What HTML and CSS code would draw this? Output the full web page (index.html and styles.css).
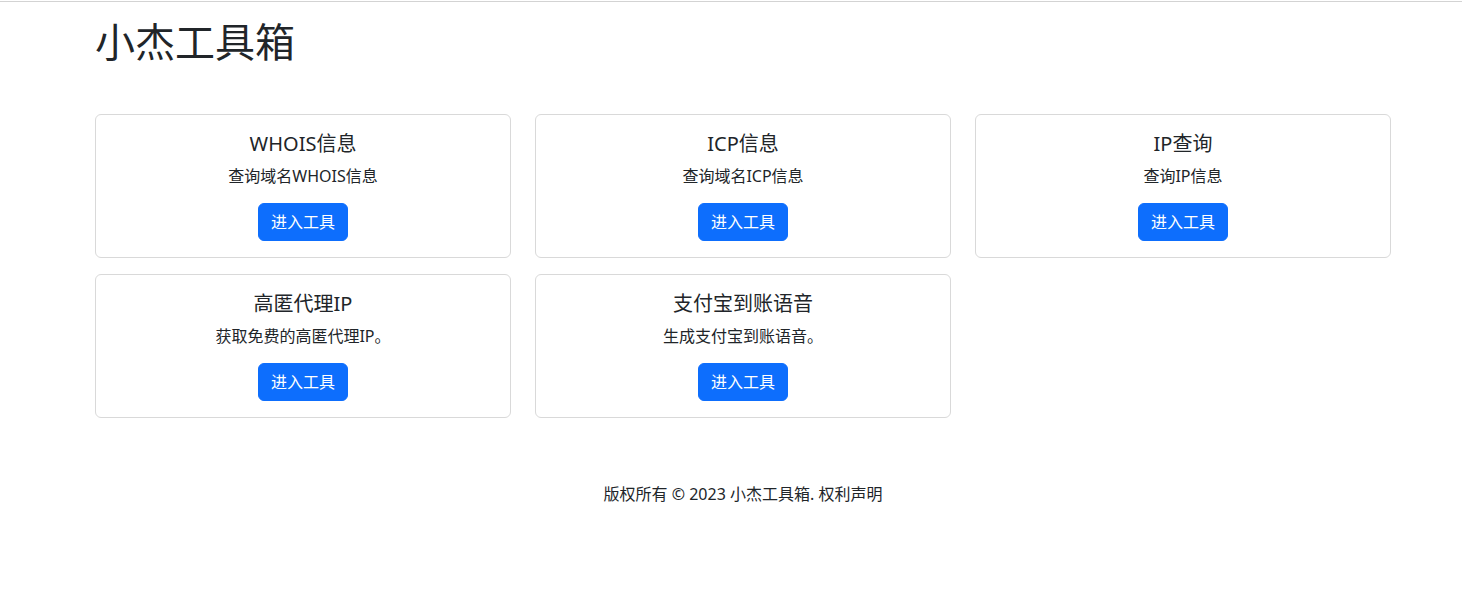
FILE: index.html
```html
<!DOCTYPE html>
<html lang="zh-CN">
<head>
    <meta charset="UTF-8">
    <meta name="viewport" content="width=device-width, initial-scale=1.0">
    <title>小杰工具箱</title>
    <link rel="stylesheet" href="styles.css">
</head>
<body>
    <div class="page">
        <div class="container">
            <h1 class="site-title">小杰工具箱</h1>
            <div class="tools">
                <div class="tool-card">
                    <h5 class="tool-card__title">WHOIS信息</h5>
                    <p class="tool-card__text">查询域名WHOIS信息</p>
                    <a class="btn" href="#">进入工具</a>
                </div>
                <div class="tool-card">
                    <h5 class="tool-card__title">ICP信息</h5>
                    <p class="tool-card__text">查询域名ICP信息</p>
                    <a class="btn" href="#">进入工具</a>
                </div>
                <div class="tool-card">
                    <h5 class="tool-card__title">IP查询</h5>
                    <p class="tool-card__text">查询IP信息</p>
                    <a class="btn" href="#">进入工具</a>
                </div>
                <div class="tool-card">
                    <h5 class="tool-card__title">高匿代理IP</h5>
                    <p class="tool-card__text">获取免费的高匿代理IP。</p>
                    <a class="btn" href="#">进入工具</a>
                </div>
                <div class="tool-card">
                    <h5 class="tool-card__title">支付宝到账语音</h5>
                    <p class="tool-card__text">生成支付宝到账语音。</p>
                    <a class="btn" href="#">进入工具</a>
                </div>
            </div>
            <footer class="footer">
                <p>版权所有 &copy; 2023 小杰工具箱. 权利声明</p>
            </footer>
        </div>
    </div>
</body>
</html>
```

FILE: styles.css
```css
* {
    box-sizing: border-box;
}
body {
    margin: 0;
    padding-top: 1px;
    font-family: "Noto Sans", "Noto Sans CJK SC", sans-serif;
    font-size: 16px;
    line-height: 1.5;
    color: #212529;
    background-color: #fff;
}
.page {
    border-top: 1px solid #d3d3d3;
}
.container {
    width: 1296px;
    margin-left: 95px;
}
.site-title {
    margin: 16px 0 48px;
    font-size: 40px;
    font-weight: 400;
    line-height: 48px;
}
.tools {
    display: grid;
    grid-template-columns: repeat(3, 1fr);
    column-gap: 24px;
}
.tool-card {
    margin-bottom: 16px;
    padding: 17px 16px 16px;
    border: 1px solid #d9d9d9;
    border-radius: 6px;
    text-align: center;
}
.tool-card__title {
    margin: 0 0 8px;
    font-size: 20px;
    font-weight: 400;
    line-height: 24px;
}
.tool-card__text {
    margin: 0 0 15px;
    line-height: 24px;
}
.btn {
    display: inline-block;
    padding: 6px 12px;
    border: 1px solid #0d6efd;
    border-radius: 6px;
    font-size: 16px;
    line-height: 24px;
    color: #fff;
    background-color: #0d6efd;
    text-decoration: none;
}
.footer {
    margin-top: 48px;
    text-align: center;
}
.footer p {
    margin: 0;
}
```
